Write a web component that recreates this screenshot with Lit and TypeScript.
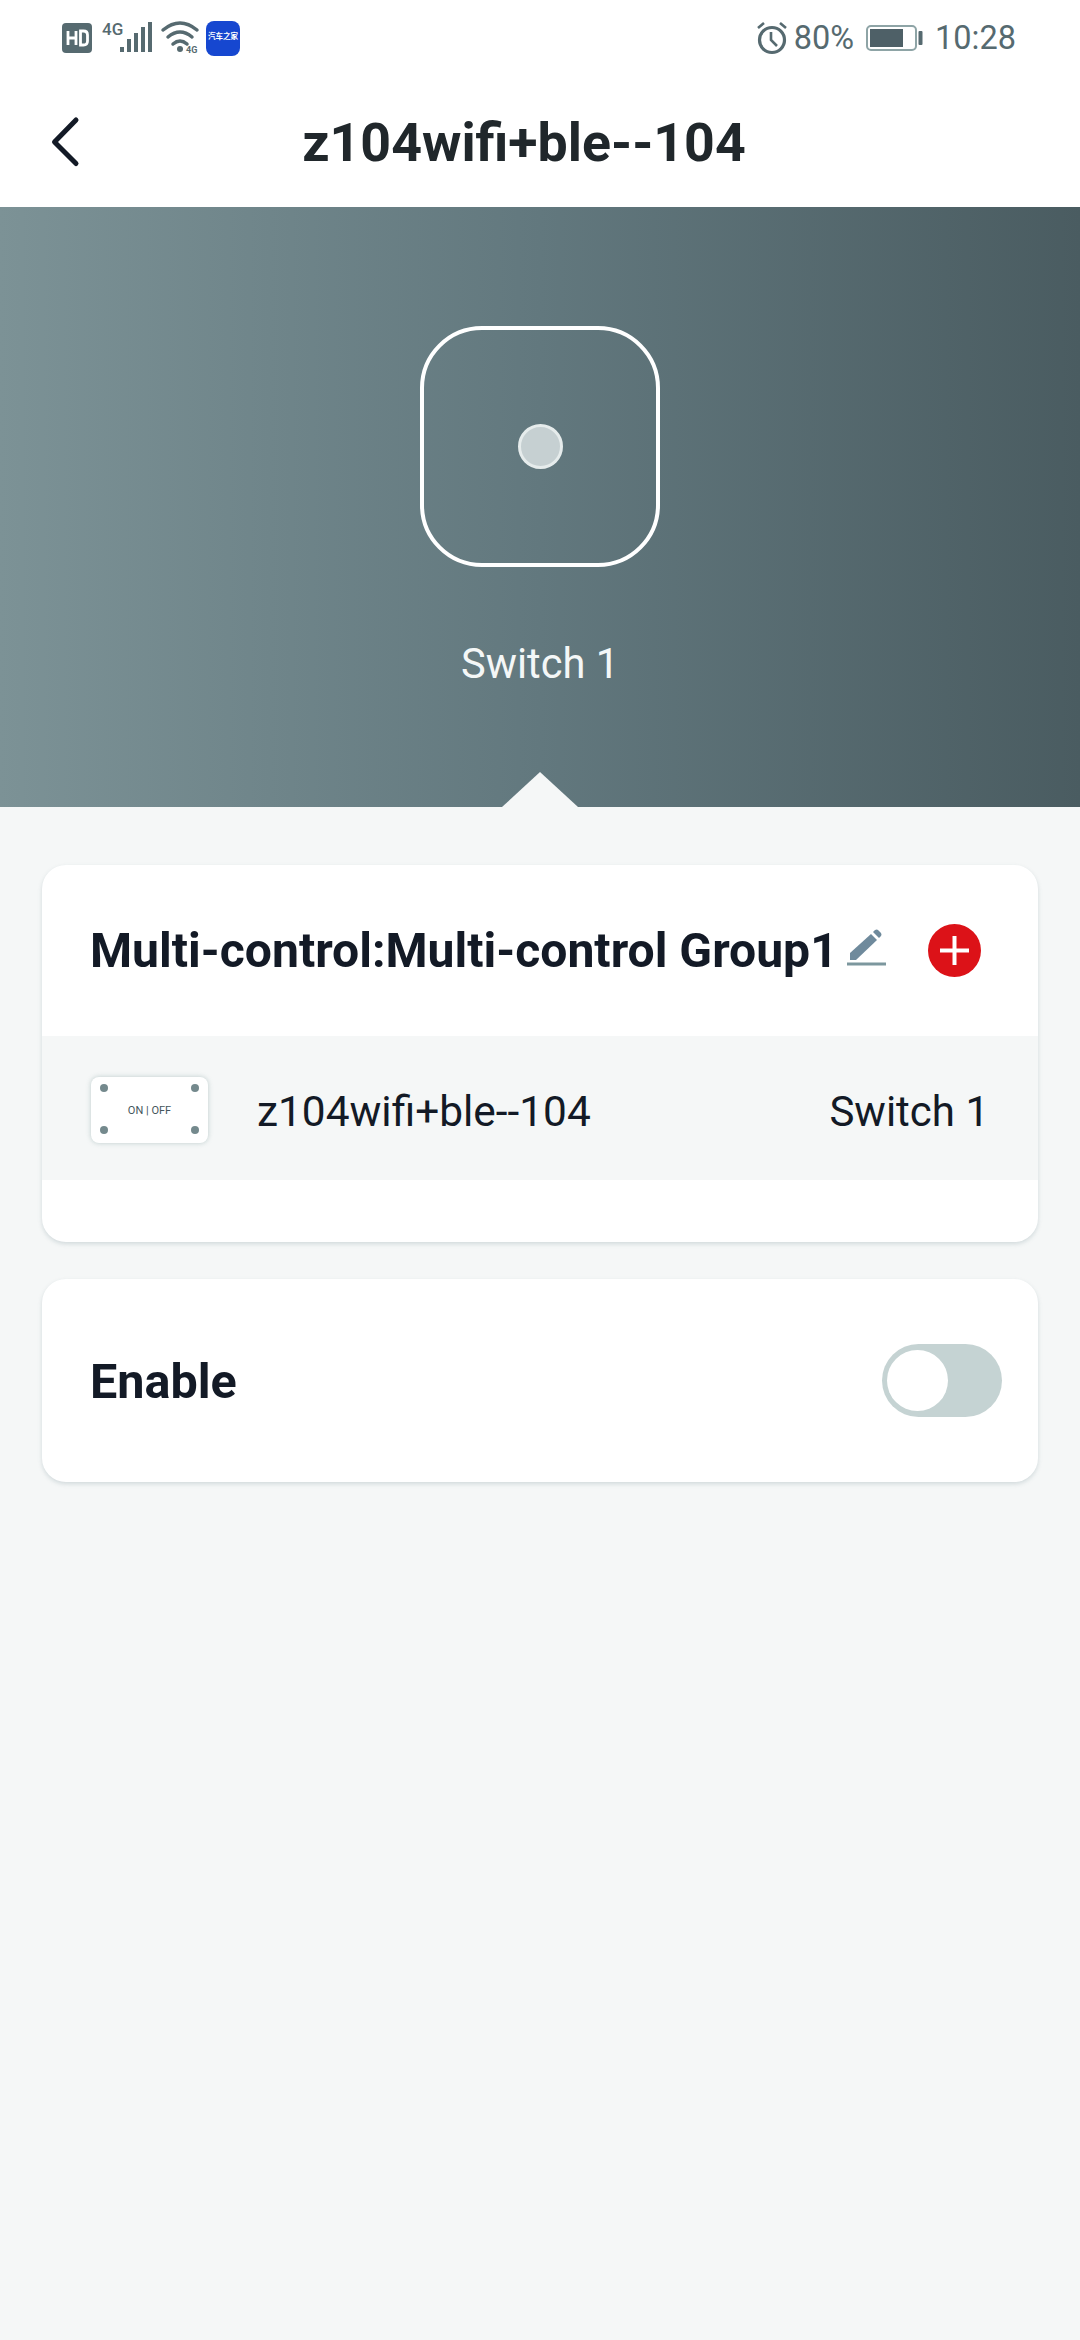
import { LitElement, html, css } from "lit";
import { customElement } from "lit/decorators.js";

@customElement("app-root")
export class AppRoot extends LitElement {
  static styles = css`
    :host { display: block; width: 1080px; height: 2340px; background: #f5f7f7; font-family: Roboto, "Liberation Sans", sans-serif; overflow: hidden; }
    .top { height: 207px; background: #fff; display: flex; flex-direction: column; }
    .status { height: 76px; display: flex; align-items: center; justify-content: space-between; padding: 0 64px 0 62px; color: #566a70; font-size: 32.5px; box-sizing: border-box; }
    .sl, .sr { display: flex; align-items: center; }
    .sl svg, .sr svg { display: block; overflow: visible; }
    .bluebox { width: 34px; height: 35px; border-radius: 8px; background: #1647d0; color: #fff; font: 700 7.5px "Noto Sans CJK SC", sans-serif; display: flex; align-items: center; justify-content: center; margin-left: 8px; white-space: nowrap; overflow: hidden; padding-bottom: 5px; box-sizing: border-box; }
    .pct { margin: 0 12px 0 7px; }
    .time { margin-left: 12px; }
    .nav { flex: 1; display: flex; align-items: center; position: relative; padding: 0 0 0 48px; }
    .nav h1 { margin: 3px 0 0; font-size: 53.7px; font-weight: 700; color: #20272b; position: absolute; left: 0; right: 32px; text-align: center; line-height: 60px; }
    .hero { height: 600px; background: linear-gradient(90deg, #7c9296 0%, #62787e 50%, #4a5c61 100%); position: relative; display: flex; flex-direction: column; align-items: center; padding-top: 119px; box-sizing: border-box; }
    .square { width: 240px; height: 241px; box-sizing: border-box; border: 4px solid #fff; border-radius: 62px; display: flex; align-items: center; justify-content: center; }
    .dot { width: 45px; height: 45px; box-sizing: border-box; border-radius: 50%; background: #c6d0d2; border: 3px solid #e6ecec; }
    .label { margin-top: 73px; color: #f4f7f7; font-size: 41.6px; line-height: 48px; }
    .tri { position: absolute; bottom: 0; left: 502px; width: 76px; height: 35px; fill: #f5f7f7; display: block; }
    .content { padding: 58px 42px 0; display: flex; flex-direction: column; gap: 37px; }
    .card { background: #fff; border-radius: 24px; box-shadow: 0 2px 4px rgba(120,145,150,.28); overflow: hidden; }
    .head { height: 171px; display: flex; align-items: center; padding: 0 57px 0 48px; box-sizing: border-box; }
    .head .t { font-size: 48.1px; font-weight: 700; color: #131a26; white-space: nowrap; }
    .pen { margin-left: 9px; margin-top: -8px; }
    .plus { margin-left: auto; }
    .row { height: 144px; background: #f5f7f7; display: flex; align-items: center; padding: 7px 49px 0 49px; box-sizing: border-box; color: #131a26; font-size: 42.4px; margin-bottom: 62px; }
    .thumb { width: 117px; height: 66px; margin-top: -3px; box-sizing: border-box; background: #fff; border-radius: 8px; box-shadow: 0 0 5px rgba(120,150,150,.45); position: relative; display: flex; align-items: center; justify-content: center; font-family: Roboto, sans-serif; font-size: 11px; color: #44555c; margin-right: 49px; }
    .screw { position: absolute; width: 8px; height: 8px; border-radius: 50%; background: #74898d; }
    .s1 { left: 9px; top: 7px; } .s2 { right: 9px; top: 7px; } .s3 { left: 9px; bottom: 9px; } .s4 { right: 9px; bottom: 9px; }
    .right { margin-left: auto; font-size: 42px; }
    .enable { height: 203px; display: flex; align-items: center; justify-content: space-between; padding: 0 36px 0 48px; box-sizing: border-box; font-size: 48.5px; font-weight: 700; color: #131a26; }
    .enable span { padding-top: 2px; }
    .toggle { width: 120px; height: 73px; border-radius: 37px; background: #c5d3d3; position: relative; }
    .knob { position: absolute; left: 5px; top: 6px; width: 61px; height: 61px; border-radius: 50%; background: #fff; }
  `;

  render() {
    return html`
      <div class="top">
        <div class="status">
          <div class="sl">
            <svg width="136" height="40" viewBox="0 0 136 40">
              <rect x="0" y="5" width="30" height="30" rx="4" fill="#566a70"/>
              <path d="M6 13v14M14 13v14M6 20h8M18.500 13v14h3q4 0 4-4v-6q0-4-4-4z" stroke="#fff" stroke-width="2.800" fill="none"/>
              <text x="40" y="17" font-family="Roboto, sans-serif" font-size="17" font-weight="500" fill="#566a70">4G</text>
              <path d="M60 29v5M67 21v13M74 15v19M81 9v25M88 4v30" stroke="#566a70" stroke-width="4" fill="none"/>
              <path d="M101 12Q118-2 135 12M106 19Q118 9 130 19M111 26Q118 20 125 26" stroke="#566a70" stroke-width="3.500" fill="none" stroke-linecap="round"/>
              <circle cx="118" cy="31" r="3" fill="#566a70"/>
              <text x="124" y="35" font-family="Roboto, sans-serif" font-size="9" font-weight="700" fill="#566a70">4G</text>
            </svg>
            <div class="bluebox">汽车之家</div>
          </div>
          <div class="sr">
            <svg width="30" height="34" viewBox="1 0 30 34">
              <circle cx="16" cy="19" r="12.500" stroke="#566a70" stroke-width="3.200" fill="none"/>
              <path d="M15 11v8l6 6M2 7l6-5M30 7l-6-5" stroke="#566a70" stroke-width="2.600" fill="none"/>
            </svg>
            <span class="pct">80%</span>
            <svg width="57" height="28" viewBox="0 0 57 28">
              <rect x="1" y="2" width="49" height="24" rx="4" fill="none" stroke="#8ea4a6" stroke-width="2"/>
              <rect x="4" y="5" width="33" height="18" fill="#4e6067"/>
              <rect x="52.500" y="7" width="4" height="14" rx="1" fill="#566a70"/>
            </svg>
            <span class="time">10:28</span>
          </div>
        </div>
        <div class="nav">
          <svg width="34" height="52" viewBox="0 0 34 52">
            <path d="M28 4 6.500 26 28 47.500" stroke="#131a26" stroke-width="5" fill="none" stroke-linecap="round" stroke-linejoin="round"/>
          </svg>
          <h1>z104wifi+ble--104</h1>
        </div>
      </div>
      <div class="hero">
        <div class="square"><div class="dot"></div></div>
        <div class="label">Switch 1</div>
        <svg class="tri" viewBox="0 0 76 35"><path d="M0 35 38 0l38 35z"/></svg>
      </div>
      <div class="content">
        <div class="card">
          <div class="head">
            <span class="t">Multi-control:Multi-control Group1</span>
            <svg class="pen" width="39" height="40" viewBox="0 0 39 40">
              <path d="M3 33v-7L24 7l6 6-21 20z" fill="#6f8a9c"/>
              <path d="M26 5l2-2q2-1 3 0l3 3q1 2 0 3l-2 2z" fill="#6f8a9c"/>
              <path d="M0 37h39" stroke="#7c979e" stroke-width="3"/>
            </svg>
            <svg class="plus" width="53" height="53" viewBox="0 0 53 53">
              <circle cx="26.500" cy="26.500" r="26.500" fill="#dc1218"/>
              <path d="M26.500 12v29M12 26.500h29" stroke="#fff" stroke-width="4"/>
            </svg>
          </div>
          <div class="row">
            <div class="thumb">
              <i class="screw s1"></i><i class="screw s2"></i><i class="screw s3"></i><i class="screw s4"></i>
              ON | OFF
            </div>
            <span>z104wifi+ble--104</span>
            <span class="right">Switch 1</span>
          </div>
        </div>
        <div class="card enable">
          <span>Enable</span>
          <div class="toggle"><div class="knob"></div></div>
        </div>
      </div>
    `;
  }
}
